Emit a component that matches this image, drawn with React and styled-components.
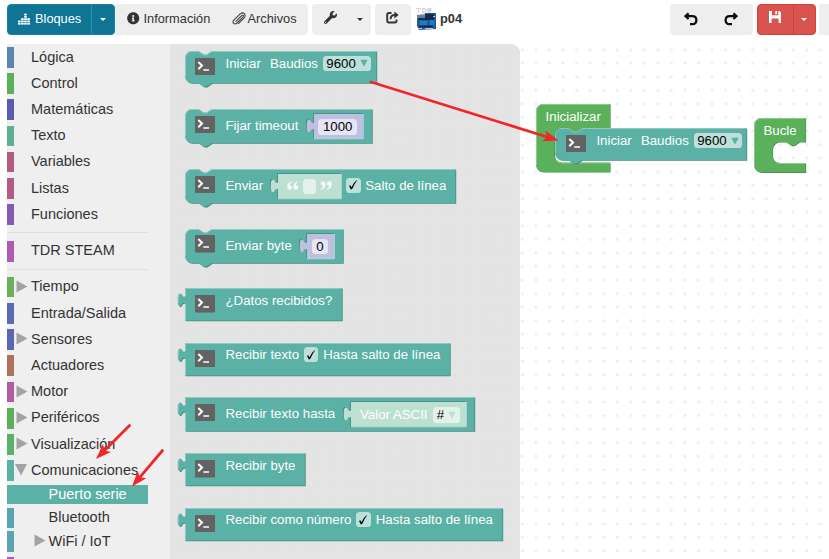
import React from "react";
import styled, { createGlobalStyle } from "styled-components";
import { FaInfoCircle, FaWrench } from "react-icons/fa";

const Global = createGlobalStyle`
  * { box-sizing: border-box; }
  body { margin: 0; background: #fff; overflow: hidden; font-family: "Liberation Sans", Arial, sans-serif; }
  svg { display: block; flex: none; }
`;

const Page = styled.div`
  position: relative;
  display: flex;
  flex-direction: column;
  width: 829px;
  height: 559px;
  overflow: hidden;
`;

/* ---------- toolbar ---------- */
const Toolbar = styled.header`
  display: flex;
  flex: none;
  height: 44px;
  padding: 4px 0 0 7px;
  font-size: 12.8px;
  color: #333;
`;
const Group = styled.div`
  display: flex;
  flex: none;
  height: 31px;
  width: ${(p) => p.$w}px;
  margin-left: ${(p) => p.$ml || 0}px;
  border-radius: ${(p) => p.$radius || "4px"};
  background: ${(p) => p.$bg || "#eee"};
  color: ${(p) => p.$fg || "#333"};
  border: 1px solid ${(p) => p.$line || "transparent"};
  overflow: hidden;
`;
const Button = styled.button`
  display: flex;
  flex: none;
  align-items: center;
  width: ${(p) => p.$w}px;
  gap: ${(p) => p.$gap || 4}px;
  padding: 0 0 ${(p) => p.$lift || 2}px ${(p) => p.$pl || 0}px;
  border: 0;
  border-right: ${(p) => (p.$divider ? `1px solid ${p.$divider}` : 0)};
  background: none;
  color: inherit;
  font: inherit;
  white-space: nowrap;
`;
const Divided = styled(Button)`
  border-left: 1px solid #d43f3a;
`;
const Caret = styled.span`
  margin-top: 2px;
  border: 3.6px solid transparent;
  border-top-color: currentColor;
  border-bottom: 0;
`;
const Project = styled.div`
  display: flex;
  flex: none;
  align-items: center;
  gap: 4px;
  height: 31px;
  width: 259px;
  padding-left: 5px;
  padding-bottom: 2px;
  font-weight: bold;
`;

/* ---------- sidebar ---------- */
const Main = styled.main`
  display: flex;
  flex: 1;
  min-height: 0;
  padding-left: 7px;
`;
const Sidebar = styled.nav`
  display: flex;
  flex-direction: column;
  flex: none;
  width: 163px;
  padding: 3px 22px 0 0;
  background: #efefef;
  font-size: 14.5px;
  color: #333;
`;
const Category = styled.div`
  display: flex;
  flex: none;
  align-items: center;
  height: ${(p) => (p.$selected ? 19.6 : 20.6)}px;
  margin-bottom: ${(p) => (p.$selected ? 3.4 : p.$sub ? 3.2 : 5.63)}px;
  padding-left: ${(p) => (p.$sub ? 17.5 : 0)}px;
  border-left: 7px solid ${(p) => p.$color};
  background: ${(p) => (p.$selected ? p.$color : "none")};
  color: ${(p) => (p.$selected ? "#fff" : "inherit")};
  white-space: nowrap;
`;
const SubMenu = styled.div`
  display: flex;
  flex-direction: column;
  flex: none;
  margin-top: -1.9px;
  padding-bottom: 2px;
`;
const Toggle = styled.svg`
  width: 17px;
  height: 14px;
  fill: #a3a3a3;
  margin-top: -3px;
`;
const Indent = styled.span`
  flex: none;
  width: 17px;
`;
const Name = styled.span`
  margin-top: -1.6px;
`;
const Separator = styled.hr`
  flex: none;
  width: 100%;
  margin: ${(p) => p.$top}px 0 ${(p) => p.$bottom}px;
  border: 0;
  height: 1px;
  background: #e1e1e1;
`;

/* ---------- canvas and flyout ---------- */
const Canvas = styled.section`
  position: relative;
  flex: 1;
  background: radial-gradient(circle, #ececec 1px, rgba(236, 236, 236, 0) 1.9px) -6.6px -1px / 13.56px 13.56px;
`;
const Flyout = styled.div`
  width: 350px;
  height: 100%;
  padding: 7px 0 0 14.5px;
  border-radius: 0 9px 0 0;
  background: rgba(221, 221, 221, 0.8);
`;
const Placed = styled.div`
  position: absolute;
  left: ${(p) => p.$x}px;
  top: ${(p) => p.$y}px;
`;
const BlockBox = styled.div`
  position: relative;
  display: flex;
  align-items: flex-start;
  width: ${(p) => p.$w}px;
  height: ${(p) => p.$h}px;
  margin-bottom: ${(p) => p.$mb || 0}px;
  font-size: 13.25px;
  line-height: 15px;
  color: #fff;
  white-space: pre;
`;
const Shape = styled.svg`
  position: absolute;
  left: 0;
  top: 0;
  overflow: visible;
`;
const Item = styled.span`
  position: relative;
  flex: none;
  margin-left: ${(p) => p.$ml || 0}px;
  margin-top: ${(p) => p.$t}px;
  width: ${(p) => (p.$w ? `${p.$w}px` : "auto")};
`;
const Field = styled(Item)`
  display: flex;
  align-items: center;
  justify-content: center;
  gap: 4px;
  height: 15.5px;
  border-radius: 3.6px;
  background: ${(p) => p.$bg || "#bde0db"};
  color: #000;
`;
const Slot = styled.div`
  position: relative;
  display: flex;
  align-items: flex-start;
  flex: none;
  margin-top: 5px;
  width: ${(p) => p.$w}px;
  height: 25px;
  color: #fff;
`;
const Arrows = styled.svg`
  position: absolute;
  left: 0;
  top: 0;
  pointer-events: none;
`;

const TEAL = { base: "#5bb1a5", dark: "#46897f", light: "#8ecac1" };
const GREEN = { base: "#5bb15b", dark: "#468a46", light: "#8dca8d" };
const TAB = "V15.4 C-2,14.2 -3,15.4 -3.6,17 C-4.6,19.4 -7.2,18 -7.2,14.5 V9.5 C-7.2,6 -4.6,4.2 -3.4,6.8 C-2.6,8.8 -1.4,9.2 0,8.4";

function statementPath(w, h) {
  return `M7,0 H13.5 l5.4,3.6 h2.7 l5.4,-3.6 H${w} V${h} H27 l-5.4,3.6 h-2.7 l-5.4,-3.6 H7 a7,7 0 0 1 -7,-7 V7 a7,7 0 0 1 7,-7 z`;
}
function valuePath(w, h) {
  return `M0,0 H${w} V${h} H0 ${TAB} z`;
}

function BlockShape({ w, h, value }) {
  const d = value ? valuePath(w, h) : statementPath(w, h);
  const top = value
    ? `M0.5,${h - 0.5} V16 M-6.7,14.5 V9.5 C-6.7,7.5 -5.6,5.8 -4.4,6 M0.5,8 V0.5 H${w - 1}`
    : `M0.5,${h - 7} V7 A6.5,6.5 0 0 1 7,0.5 H13.4 l5.4,3.6 h2.8 l5.4,-3.6 H${w - 1}`;
  return (
    <Shape width={w} height={h}>
      <path d={d} fill={TEAL.dark} transform="translate(0.8 0.8)" />
      <path d={d} fill={TEAL.base} />
      <path d={top} fill="none" stroke={TEAL.light} strokeWidth="1" />
    </Shape>
  );
}

function SlotShape({ w, color }) {
  return (
    <Shape width={w} height={25}>
      <path d={valuePath(w, 25)} fill={TEAL.dark} transform="translate(-0.8 -0.8)" />
      <path d={valuePath(w, 25)} fill={color} />
      <path d={`M0,24.8 H${w} V0`} fill="none" stroke="#a5d5cd" />
    </Shape>
  );
}

function Terminal({ t = 6.5 }) {
  return (
    <Item $ml={10.5} $t={t} $w={20}>
      <svg width="20" height="17.5" viewBox="0 0 20 17.5">
        <rect width="20" height="17.5" rx="1" fill="#636363" />
        <path d="M3.3,4 L7,7.5 L3.3,11.2" fill="none" stroke="#fff" strokeWidth="2" />
        <path d="M8.3,12 H14" stroke="#fff" strokeWidth="1.5" />
      </svg>
    </Item>
  );
}

function Down({ color = "#5bb1a5" }) {
  return (
    <svg width="8" height="8" viewBox="0 0 8 8">
      <path d="M0.3,0.8 H7.7 L4,7.7 z" fill={color} />
    </svg>
  );
}

function Check({ ml, t = 4.3 }) {
  return (
    <Field $ml={ml} $t={t} $w={14.8}>
      <svg width="10" height="12" viewBox="0 0 10 12">
        <path d="M1,7 L2.3,6.2 Q3,7.2 3.4,8.4 Q5.5,3.5 8.6,1.2 L9,1.5 Q6.2,5 4.2,10.1 L2.8,10.4 Q2,8.5 1,7 z" fill="#000" />
      </svg>
    </Field>
  );
}

function Block({ w, h = 32.5, mb, value, iconTop, children }) {
  return (
    <BlockBox $w={w} $h={h} $mb={mb}>
      <BlockShape w={w - 0.6} h={h} value={value} />
      <Terminal t={iconTop} />
      {children}
    </BlockBox>
  );
}

function StartBlock({ mb }) {
  return (
    <Block w={192} h={32} mb={mb}>
      <Item $ml={10.5} $t={4.8} $w={44.5}>Iniciar</Item>
      <Item $t={4.8} $w={52.7}>Baudios</Item>
      <Field $t={4.7} $w={48.8}>9600<Down /></Field>
    </Block>
  );
}

function Cavity({ w, h, innerTop, innerBottom, label }) {
  const outer = `M7,0 H${w} V${innerTop} H45.5 l-5.4,3.6 h-2.7 l-5.4,-3.6 H25.5 a7,7 0 0 0 -7,7 V${innerBottom - 7} a7,7 0 0 0 7,7 H${w} V${h} H7 a7,7 0 0 1 -7,-7 V7 a7,7 0 0 1 7,-7 z`;
  return (
    <BlockBox $w={w} $h={h}>
      <Shape width={w} height={h}>
        <path d={outer} fill={GREEN.dark} transform="translate(0.6 0.6)" />
        <path d={outer} fill={GREEN.base} />
        <path
          d={`M0.5,${h - 7} V7 A6.5,6.5 0 0 1 7,0.5 H${w - 1} M20,${innerBottom - 3} Q22,${innerBottom + 0.5} 26,${innerBottom + 0.5} H${w}`}
          fill="none"
          stroke={GREEN.light}
        />
      </Shape>
      <Item $ml={9.3} $t={5}>{label}</Item>
    </BlockBox>
  );
}

function Quote({ flip }) {
  return (
    <svg width="12" height="9" viewBox="0 0 12 9">
      <path
        transform={flip ? "rotate(180 6 4.5)" : undefined}
        d="M5,0.3 C2,1 0.3,3 0.3,5.8 C0.3,7.7 1.3,8.7 2.8,8.7 C4.2,8.7 5.1,7.8 5.1,6.5 C5.1,5.2 4.2,4.4 2.7,4.4 C2.7,2.8 3.8,1.6 5.2,1.1 z M11.2,0.3 C8.2,1 6.5,3 6.5,5.8 C6.5,7.7 7.5,8.7 9,8.7 C10.4,8.7 11.3,7.8 11.3,6.5 C11.3,5.2 10.4,4.4 8.9,4.4 C8.9,2.8 10,1.6 11.4,1.1 z"
        fill="#fff"
        opacity="0.85"
      />
    </svg>
  );
}

function EqualizerIcon() {
  const columns = [[0, 2], [3.1, 3], [6.2, 5], [9.3, 3]];
  return (
    <svg width="13" height="12" viewBox="0 0 13 12">
      {columns.map(([x, n]) =>
        Array.from({ length: n }, (_, i) => (
          <rect key={`${x}-${i}`} x={x} y={9.8 - i * 2.3} width="2.6" height="1.8" fill="#fff" />
        ))
      )}
    </svg>
  );
}

function ClipIcon() {
  return (
    <svg width="14" height="14" viewBox="0 0 14 14" fill="none" stroke="#444" strokeWidth="1.1">
      <path d="M4.2,9.1 L9.7,3.6 Q10.9,2.7 11.3,3.6 Q11.7,4.3 10.6,5.3 L5,11 Q3.2,12.4 1.7,11.4 Q0.3,9.9 1.8,8.1 L8.2,1.9 Q10.6,0 12.3,1.6 Q14,3.4 12.2,5.8 L6.2,11.8 M3.6,9.7 L8.6,4.7" />
    </svg>
  );
}

function ShareIcon() {
  return (
    <svg width="13" height="13" viewBox="0 0 13 13" fill="none" stroke="#333" strokeWidth="1.9">
      <path d="M5.5,2 H3 Q1.2,2 1.2,3.8 V9.5 Q1.2,11.5 3,11.5 H8.6 Q10.5,11.5 10.5,9.7 V8.4" />
      <path d="M4.6,8.2 Q4.5,4 9,4" />
      <path d="M8.4,0.4 L12.7,4 L8.4,7.4 z" fill="#333" stroke="none" />
    </svg>
  );
}

function TurnIcon({ flip }) {
  return (
    <svg width="14" height="14" viewBox="0 0 14 14">
      <g transform={flip ? "translate(14 0) scale(-1 1)" : undefined} fill="none" stroke="#111" strokeWidth="2.3">
        <path d="M2.5,4.2 H8.3 C13.8,4.2 13.6,12.2 8.6,12.2 H6" />
        <path d="M4.6,1.4 L1.6,4.2 L4.6,7" />
      </g>
    </svg>
  );
}

function SaveIcon() {
  return (
    <svg width="12" height="12" viewBox="0 0 12 12">
      <path fill="#fff" fillRule="evenodd" d="M0,0 H10.5 L12,1.5 V12 H0 z M3,0 V4.3 H9.3 V0 z M2.6,7.6 V12 H9.6 V7.6 z" />
      <path fill="#fff" d="M6.3,0 H8.1 V3.3 H6.3z" />
    </svg>
  );
}

function BoardPicture() {
  return (
    <svg width="20" height="22" viewBox="0 0 20 22">
      <g fill="#d6d6d6">
        <path d="M0,0 h5 v1.2 h-1.8 v4 h-1.4 v-4 H0z" />
        <path fillRule="evenodd" d="M6,0 h3 l1.5,1.5 v2 l-1.5,1.7 h-3z M7.3,1.2 v2.8 h1.2 l0.7,-0.8 v-1.2 l-0.7,-0.8z" />
        <path d="M11.5,0 h4 v3 h-1 l1,2.2 h-1.4 l-1.2,-2.2 v2.2 h-1.4z" />
      </g>
      <path d="M1,7 L9,6.5 V5 H20 V21 L3,22 L1,18 z" fill="#235b94" />
      <path d="M1,7 L9,6.5 V10 L1,12 z" fill="#66849f" />
      <path d="M9,6 H18 V10 L9,11 z" fill="#152c4d" />
      <path d="M4,13 h7 v4 h-7z M14,12 h4 v5 h-4z" fill="#1680cc" />
      <path d="M2,11 h16 M3,18.5 h14" stroke="#102a50" strokeWidth="2" />
      <path d="M2,20.5 h4 M9,20.5 h8 M17,8.5 h2" stroke="#b6c9d7" />
    </svg>
  );
}

const categories = [
  ["Lógica", "#5b85b1"],
  ["Control", "#5bb15b"],
  ["Matemáticas", "#5b5bb1"],
  ["Texto", "#5bb194"],
  ["Variables", "#b15b85"],
  ["Listas", "#b15b85"],
  ["Funciones", "#855bb1"],
];
const devices = [
  ["Tiempo", "#6bb15b", true],
  ["Entrada/Salida", "#5b6bb1"],
  ["Sensores", "#5b67b1", true],
  ["Actuadores", "#b1705b"],
  ["Motor", "#b15ba0", true],
  ["Periféricos", "#5bb15b", true],
  ["Visualización", "#5bb168", true],
];

function Chevron({ open }) {
  return (
    <Toggle viewBox="0 0 17 14">
      <path d={open ? "M1,2 H13 L7,13.5 z" : "M2.5,1.5 V13.5 L13.5,7.5 z"} />
    </Toggle>
  );
}

function Row({ name, color, expandable, open, sub, selected }) {
  return (
    <Category $color={color} $sub={sub} $selected={selected}>
      {expandable ? <Chevron open={open} /> : <Indent />}
      <Name>{name}</Name>
    </Category>
  );
}

function Arrow({ from, to }) {
  const dx = to[0] - from[0];
  const dy = to[1] - from[1];
  const length = Math.hypot(dx, dy);
  const angle = (Math.atan2(dy, dx) * 180) / Math.PI;
  return (
    <g transform={`translate(${from[0]} ${from[1]}) rotate(${angle})`} fill="#f0262b">
      <path d={`M0,0 H${length - 11}`} stroke="#f0262b" strokeWidth="2.8" strokeLinecap="round" />
      <path d={`M${length},0 L${length - 15.5},-5.6 L${length - 12},0 L${length - 15.5},5.6 z`} />
    </g>
  );
}

export default function App() {
  return (
    <Page>
      <Global />
      <Toolbar>
        <Group $w={108} $bg="#107595" $fg="#fff" $line="#1583a6">
          <Button $w={84} $pl={10} $divider="#2f8fad"><EqualizerIcon />Bloques</Button>
          <Button $w={22} $pl={8}><Caret /></Button>
        </Group>
        <Group $w={193} $radius="0 4px 4px 0">
          <Button $w={106} $pl={11} $gap={4}><FaInfoCircle size={12.5} />Información</Button>
          <Button $w={85} $pl={9.5} $gap={2}><ClipIcon />Archivos</Button>
        </Group>
        <Group $w={59} $ml={4}>
          <Button $w={38} $pl={10.5} $lift={4}><FaWrench size={13} /></Button>
          <Button $w={20} $pl={5.5}><Caret /></Button>
        </Group>
        <Group $w={36} $ml={4}>
          <Button $w={34} $pl={10} $lift={4}><ShareIcon /></Button>
        </Group>
        <Project><BoardPicture />p04</Project>
        <Group $w={83}>
          <Button $w={40} $pl={13} $lift={1}><TurnIcon /></Button>
          <Button $w={40} $pl={13} $lift={1}><TurnIcon flip /></Button>
        </Group>
        <Group $w={59} $ml={4} $bg="#d9534f" $fg="#fff" $line="#d43f3a">
          <Button $w={35} $pl={10.5} $lift={5}><SaveIcon /></Button>
          <Divided $w={22} $pl={6.5}><Caret /></Divided>
        </Group>
        <Group $w={20} $ml={3} $radius="0" />
      </Toolbar>
      <Main>
        <Sidebar>
          {categories.map(([name, color]) => <Row key={name} name={name} color={color} />)}
          <Separator $top={1.8} $bottom={7.6} />
          <Row name="TDR STEAM" color="#ab5bb1" />
          <Separator $top={1.7} $bottom={7} />
          {devices.map(([name, color, expandable]) => (
            <Row key={name} name={name} color={color} expandable={expandable} />
          ))}
          <Row name="Comunicaciones" color="#5bb1a5" expandable open />
          <SubMenu>
            <Row name="Puerto serie" color="#5bb1a5" sub selected />
            <Row name="Bluetooth" color="#5ba5b1" sub />
            <Row name="WiFi / IoT" color="#5ba5b1" sub expandable />
          </SubMenu>
          <Row name="" color="#ab5bb1" />
        </Sidebar>
        <Canvas>
          <Flyout>
            <StartBlock mb={26} />
            <Block w={187.5} h={34} mb={26}>
              <Item $ml={10.5} $t={9} $w={88.2}>Fijar timeout</Item>
              <Slot $w={49.3}>
                <SlotShape w={49.3} color="#bfbfe0" />
                <Field $ml={4.3} $t={5} $w={39.5} $bg="#e5e5f3">1000</Field>
              </Slot>
            </Block>
            <Block w={271} h={34} mb={25.5}>
              <Item $ml={10.5} $t={9} $w={52.5}>Enviar</Item>
              <Slot $w={63.5}>
                <SlotShape w={63.5} color="#bde0d3" />
                <Item $ml={9} $t={7} $w={12}><Quote /></Item>
                <Field $ml={4} $t={4.5} $w={13} $bg="#e3f2ed" />
                <Item $ml={4} $t={7} $w={12}><Quote flip /></Item>
              </Slot>
              <Check ml={4.3} t={8.7} />
              <Item $ml={4.7} $t={9}>Salto de línea</Item>
            </Block>
            <Block w={158.5} h={34} mb={25.5}>
              <Item $ml={10.5} $t={9} $w={81.5}>Enviar byte</Item>
              <Slot $w={27.5}>
                <SlotShape w={27.5} color="#bfbfe0" />
                <Field $ml={5} $t={5} $w={16} $bg="#e5e5f3">0</Field>
              </Slot>
            </Block>
            <Block w={157.5} mb={22} value iconTop={7}>
              <Item $ml={10.5} $t={5}>¿Datos recibidos?</Item>
            </Block>
            <Block w={265.5} mb={22} value iconTop={7}>
              <Item $ml={10.5} $t={4.7} $w={78}>Recibir texto</Item>
              <Check ml={0} />
              <Item $ml={5} $t={4.7}>Hasta salto de línea</Item>
            </Block>
            <Block w={290} h={34} mb={22} value>
              <Item $ml={10.5} $t={8.7} $w={125}>Recibir texto hasta</Item>
              <Slot $w={115.5}>
                <SlotShape w={115.5} color="#bde0d3" />
                <Item $ml={9.5} $t={5.2} $w={73}>Valor ASCII</Item>
                <Field $t={5} $w={27} $bg="#e3f2ed">#<Down color="#bde0d3" /></Field>
              </Slot>
            </Block>
            <Block w={120.5} mb={22} value iconTop={7}>
              <Item $ml={10.5} $t={5}>Recibir byte</Item>
            </Block>
            <Block w={318} value iconTop={7}>
              <Item $ml={10.5} $t={4.7} $w={130.3}>Recibir como número</Item>
              <Check ml={0} />
              <Item $ml={5.2} $t={4.7}>Hasta salto de línea</Item>
            </Block>
          </Flyout>
          <Placed $x={366.3} $y={60}>
            <Cavity w={74} h={68} innerTop={24} innerBottom={58.5} label="Inicializar" />
          </Placed>
          <Placed $x={385.4} $y={84.2}><StartBlock /></Placed>
          <Placed $x={584.2} $y={73.7}>
            <Cavity w={51.5} h={54.3} innerTop={24} innerBottom={45} label="Bucle" />
          </Placed>
        </Canvas>
      </Main>
      <Arrows width="829" height="559">
        <Arrow from={[371, 82]} to={[558.5, 140.5]} />
        <Arrow from={[129.5, 425.5]} to={[96, 459]} />
        <Arrow from={[162.5, 450.5]} to={[132, 486.5]} />
      </Arrows>
    </Page>
  );
}
